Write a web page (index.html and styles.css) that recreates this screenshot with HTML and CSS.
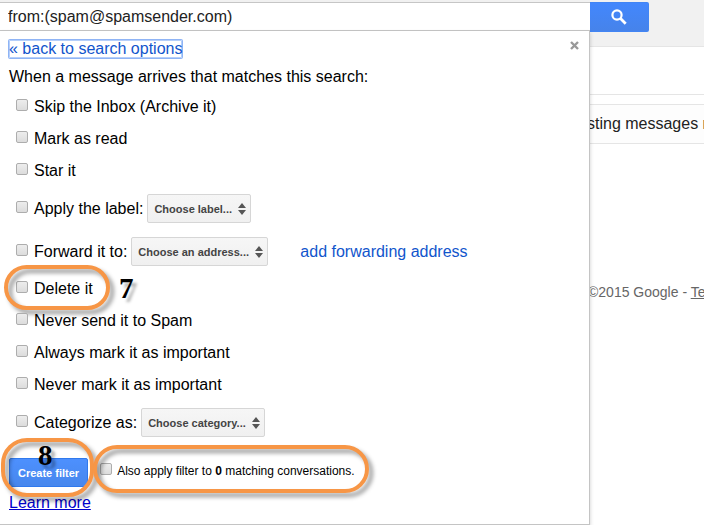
FILE: index.html
```html
<!DOCTYPE html>
<html lang="en">
<head>
  <meta charset="UTF-8" />
  <meta name="viewport" content="width=device-width, initial-scale=1.0" />
  <title>Create a filter</title>
  <link rel="stylesheet" href="styles.css">
</head>
<body>
  <div class="page">
    <div class="search">
      <input class="query" type="text" aria-label="Search mail" value="from:(spam@spamsender.com)">

      <form class="panel">
        <div class="panel-head">
          <a class="back" href="#">« back to search options</a>
          <button class="close" type="button" aria-label="Close">
            <svg width="9" height="9" viewBox="0 0 9 9"><path d="M1 1l7 7M8 1l-7 7" stroke="#999" stroke-width="2.4"/></svg>
          </button>
        </div>
        <p class="intro">When a message arrives that matches this search:</p>

        <div class="row"><input type="checkbox" id="skip"><label for="skip">Skip the Inbox (Archive it)</label></div>
        <div class="row"><input type="checkbox" id="read"><label for="read">Mark as read</label></div>
        <div class="row"><input type="checkbox" id="star"><label for="star">Star it</label></div>
        <div class="row row-tall">
          <input type="checkbox" id="apply"><label for="apply">Apply the label:</label>
          <span class="picker">
            <select aria-label="Label"><option>Choose label...</option></select>
            <svg class="arrows" width="8" height="12" viewBox="0 0 8 12"><path d="M0 5l4-5 4 5zM0 7h8l-4 5z" fill="#555"/></svg>
          </span>
        </div>
        <div class="row row-tall">
          <input type="checkbox" id="forward"><label for="forward">Forward it to:</label>
          <span class="picker">
            <select aria-label="Forwarding address"><option>Choose an address...</option></select>
            <svg class="arrows" width="8" height="12" viewBox="0 0 8 12"><path d="M0 5l4-5 4 5zM0 7h8l-4 5z" fill="#555"/></svg>
          </span>
          <a class="add" href="#">add forwarding address</a>
        </div>
        <div class="row">
          <input type="checkbox" id="delete"><label for="delete">Delete it</label>
          <span class="ring ring-delete"></span>
          <span class="step step-delete">7</span>
        </div>
        <div class="row"><input type="checkbox" id="spam"><label for="spam">Never send it to Spam</label></div>
        <div class="row"><input type="checkbox" id="always"><label for="always">Always mark it as important</label></div>
        <div class="row"><input type="checkbox" id="never"><label for="never">Never mark it as important</label></div>
        <div class="row row-tall">
          <input type="checkbox" id="categorize"><label for="categorize">Categorize as:</label>
          <span class="picker">
            <select aria-label="Category"><option>Choose category...</option></select>
            <svg class="arrows" width="8" height="12" viewBox="0 0 8 12"><path d="M0 5l4-5 4 5zM0 7h8l-4 5z" fill="#555"/></svg>
          </span>
        </div>

        <div class="actions">
          <div class="create-wrap">
            <button class="create" type="button">Create filter</button>
            <span class="ring ring-create"></span>
            <span class="step step-create">8</span>
          </div>
          <div class="also">
            <input type="checkbox" id="also"><label for="also">Also apply filter to <b>0</b> matching conversations.</label>
            <span class="ring ring-also"></span>
          </div>
        </div>
        <a class="learn" href="#">Learn more</a>
      </form>
    </div>

    <div class="mail">
      <div class="topbar">
        <button class="go" type="button" aria-label="Search">
          <svg width="16" height="16" viewBox="0 0 16 16" fill="none" stroke="#fff"><circle cx="6" cy="6" r="4.6" stroke-width="2.2"/><path d="M9.3 9.3l5.4 5.4" stroke-width="2.8"/></svg>
        </button>
      </div>
      <div class="toolbar"></div>
      <div class="notice">sting messages r</div>
      <div class="footer">©2015 Google - <a href="#">Terms</a></div>
    </div>
  </div>
</body>
</html>
```
FILE: styles.css
```css
* {
  box-sizing: border-box;
}
body {
  margin: 0;
  font-family: "Liberation Sans", Arial, sans-serif;
  font-size: 16px;
  line-height: 20px;
  color: #000;
  background: #fff;
  overflow: hidden;
}
.page {
  display: grid;
  grid-template-columns: minmax(0, 1fr) 114px;
  align-items: start;
}

/* search box and the filter panel under it */
.search {
  position: relative;
  z-index: 1;
  padding-top: 2px;
  background: #f1f1f1;
}
.query {
  display: block;
  width: 100%;
  height: 29px;
  padding: 0 8px;
  border: 1px solid #c6c6c6;
  border-width: 1px 0;
  background: #fff;
  font: inherit;
  color: #222;
}
.panel {
  padding: 9px 8px 11px;
  border: 1px solid #c4c4c4;
  border-width: 0 1px 1px 0;
  background: #fff;
  box-shadow: 0 2px 4px rgba(0, 0, 0, 0.2);
}
.panel-head {
  display: flex;
  justify-content: space-between;
  align-items: flex-start;
}
a {
  color: #15c;
  text-decoration: none;
}
.back {
  margin-left: 1px;
  line-height: 18px;
  border-radius: 1px;
  box-shadow: 0 0 0 1px #8fb4f5, inset 0 0 0 1px #b5cffa;
}
.close {
  display: flex;
  padding: 1px 2px;
  border: none;
  background: none;
}
.intro {
  margin: 9px 0 4px;
  padding-left: 1px;
}
.row {
  position: relative;
  display: flex;
  align-items: center;
  height: 32px;
  padding-left: 8px;
}
.row-tall {
  height: 43px;
}
input[type="checkbox"] {
  appearance: none;
  flex: none;
  width: 12px;
  height: 12px;
  margin: 0 6px 4px 0;
  border: 1px solid #adadad;
  border-radius: 2px;
  background: linear-gradient(#ededed, #dcdcdc);
}
.picker {
  position: relative;
  display: flex;
  margin-left: 4px;
}
.picker select {
  appearance: none;
  height: 29px;
  padding: 0 18px 0 6px;
  border: 1px solid #d6d6d6;
  border-radius: 2px;
  background: linear-gradient(#f6f6f6, #f0f0f0);
  font: bold 11px "Liberation Sans", Arial, sans-serif;
  color: #444;
}
.arrows {
  position: absolute;
  top: 9px;
  right: 5px;
  pointer-events: none;
}
.add {
  margin-left: 32px;
}
.actions {
  display: flex;
  align-items: center;
  gap: 12px;
  margin-top: 14px;
}
.create-wrap,
.also {
  position: relative;
  display: flex;
  align-items: center;
}
.create {
  height: 29px;
  margin-left: 1px;
  padding: 0 8px;
  border: 1px solid #3079ed;
  border-radius: 2px;
  background: linear-gradient(#4d90fe, #4787ed);
  font: bold 11px "Liberation Sans", Arial, sans-serif;
  color: #fff;
}
.also {
  margin-bottom: 4px;
  font-size: 12px;
}
.also input[type="checkbox"] {
  margin-right: 5px;
}
.learn {
  display: inline-block;
  margin-top: 6px;
  padding-left: 1px;
  color: #00c;
  text-decoration: underline;
}

/* orange callouts and step numbers */
.ring {
  position: absolute;
  border: 4px solid #f79646;
  border-radius: 26px;
  filter: drop-shadow(4px 4px 2px rgba(0, 0, 0, 0.4));
  pointer-events: none;
}
.ring-delete {
  top: -8px;
  left: -4px;
  width: 106px;
  height: 45px;
}
.ring-create {
  top: -20px;
  left: -7px;
  width: 93px;
  height: 59px;
}
.ring-also {
  top: -16px;
  left: -7px;
  right: -14px;
  height: 48px;
}
.step {
  position: absolute;
  font: bold 29px/30px "Liberation Serif", "Times New Roman", serif;
  text-shadow: 4px 4px 3px rgba(0, 0, 0, 0.3);
  pointer-events: none;
}
.step-delete {
  top: 0;
  left: 111px;
}
.step-create {
  top: -18px;
  left: 30px;
}

/* part of the mailbox beside the panel */
.topbar {
  height: 47px;
  padding-top: 2px;
  border-bottom: 1px solid #e5e5e5;
  background: #f1f1f1;
}
.go {
  display: flex;
  align-items: center;
  justify-content: center;
  width: 59px;
  height: 30px;
  margin: 0;
  padding: 0;
  border: 1px solid #4285f4;
  border-left: none;
  border-radius: 0 2px 2px 0;
  background: linear-gradient(#4387fd, #4683ea);
}
.toolbar {
  height: 48px;
  border-bottom: 1px solid #e5e5e5;
}
.notice {
  height: 40px;
  margin: 9px 0 0 -3px;
  border: 1px solid #e5e5e5;
  border-width: 1px 0;
  background: #fdfdfd;
  line-height: 38px;
  color: #222;
  white-space: nowrap;
}
.footer {
  margin: 138px 0 0 -2px;
  font-size: 14px;
  color: #666;
  white-space: nowrap;
}
.footer a {
  color: #666;
  text-decoration: underline;
}
```
